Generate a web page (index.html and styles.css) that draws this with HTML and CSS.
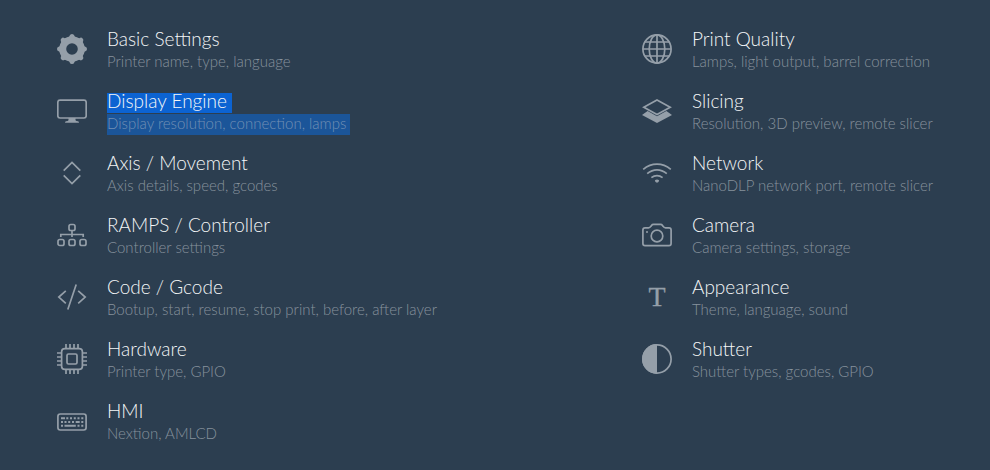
FILE: index.html
```html
<!DOCTYPE html>
<html lang="en">
<head>
<meta charset="utf-8">
<meta name="viewport" content="width=device-width, initial-scale=1">
<title>Settings</title>
<link rel="stylesheet" href="styles.css">
</head>
<body>
<nav class="settings" aria-label="Settings">
  <ul class="column">
    <li><a class="item" href="#basic">
      <svg class="icon" viewBox="0 0 30 30" aria-hidden="true">
        <defs><path id="tooth" d="M9.6 5 L11.4 3.6 Q12.4 3 12.7 1.6 Q13.2 0 15 0 Q16.8 0 17.3 1.6 Q17.6 3 18.6 3.6 L20.4 5Z"/></defs>
        <circle class="gear-ring" cx="15" cy="15" r="9.3"/>
        <g class="solid">
          <use href="#tooth"/><use href="#tooth" transform="rotate(45 15 15)"/><use href="#tooth" transform="rotate(90 15 15)"/><use href="#tooth" transform="rotate(135 15 15)"/><use href="#tooth" transform="rotate(180 15 15)"/><use href="#tooth" transform="rotate(225 15 15)"/><use href="#tooth" transform="rotate(270 15 15)"/><use href="#tooth" transform="rotate(315 15 15)"/>
        </g>
      </svg>
      <span class="text"><span class="title">Basic Settings</span><span class="note">Printer name, type, language</span></span>
    </a></li>
    <li><a class="item selected" href="#display">
      <svg class="icon" viewBox="0 0 30 30" aria-hidden="true">
        <rect class="line" x=".8" y="4.2" width="28.4" height="17.8" rx="2.2"/>
        <path class="solid" d="M11.5 22H18.5V24.2Q19 25 21 25.2Q22 25.5 22 26.8H8Q8 25.5 9 25.2Q11 25 11.5 24.2Z"/>
      </svg>
      <span class="text"><span class="title">Display Engine</span><span class="note">Display resolution, connection, lamps</span></span>
    </a></li>
    <li><a class="item" href="#axis">
      <svg class="icon" viewBox="0 0 30 30" aria-hidden="true">
        <path class="line" d="M6.7 12.7L15 4.4L23.3 12.7M6.7 17.3L15 25.6L23.3 17.3"/>
      </svg>
      <span class="text"><span class="title">Axis / Movement</span><span class="note">Axis details, speed, gcodes</span></span>
    </a></li>
    <li><a class="item" href="#ramps">
      <svg class="icon" viewBox="0 0 30 30" aria-hidden="true">
        <g class="line">
          <rect x="12" y="4.5" width="6" height="6" rx="1.8"/>
          <rect x="1" y="19.5" width="6" height="6" rx="1.8"/>
          <rect x="12" y="19.5" width="6" height="6" rx="1.8"/>
          <rect x="23" y="19.5" width="6" height="6" rx="1.8"/>
          <path d="M15 10.5V17M3.8 17V14.5H26.2V17"/>
        </g>
      </svg>
      <span class="text"><span class="title">RAMPS / Controller</span><span class="note">Controller settings</span></span>
    </a></li>
    <li><a class="item" href="#code">
      <svg class="icon" viewBox="0 0 30 30" aria-hidden="true">
        <path class="line" d="M8.8 8.9L1.8 15.1L8.8 21.4M21.2 8.9L28.2 15.1L21.2 21.4M19.2 2.4L10.8 27.6"/>
      </svg>
      <span class="text"><span class="title">Code / Gcode</span><span class="note">Bootup, start, resume, stop print, before, after layer</span></span>
    </a></li>
    <li><a class="item" href="#hardware">
      <svg class="icon" viewBox="0 0 30 30" aria-hidden="true">
        <g class="line">
          <rect x="4.6" y="4.6" width="20.8" height="20.8" rx="3.2"/>
          <rect x="10" y="10" width="10" height="10" rx="1.5"/>
          <path d="M9 0V4.5M13 0V4.5M17 0V4.5M21 0V4.5M9 25.5V30M13 25.5V30M17 25.5V30M21 25.5V30M0 9H4.5M0 13H4.5M0 17H4.5M0 21H4.5M25.5 9H30M25.5 13H30M25.5 17H30M25.5 21H30"/>
        </g>
      </svg>
      <span class="text"><span class="title">Hardware</span><span class="note">Printer type, GPIO</span></span>
    </a></li>
    <li><a class="item" href="#hmi">
      <svg class="icon" viewBox="0 0 30 30" aria-hidden="true">
        <rect class="line" x=".9" y="8" width="28.2" height="16" rx="2.4"/>
        <path class="solid" d="M4 11.3h4v2H4zM9.3 11.3h2v2h-2zM13 11.3h2v2h-2zM16.8 11.3h2v2h-2zM20.5 11.3h2v2h-2zM24.3 11.3h2v2h-2zM4 15h2v2H4zM7.5 15h2v2h-2zM11.2 15h2v2h-2zM15 15h2v2h-2zM18.7 15h4v2h-4zM24.3 15h2v2h-2zM4 18.7h2v2H4zM7.5 18.7h11.3v2H7.5zM20.5 18.7h2v2h-2zM24.3 18.7h2v2h-2z"/>
      </svg>
      <span class="text"><span class="title">HMI</span><span class="note">Nextion, AMLCD</span></span>
    </a></li>
  </ul>
  <ul class="column">
    <li><a class="item" href="#quality">
      <svg class="icon" viewBox="0 0 30 30" aria-hidden="true">
        <g class="line">
          <circle cx="15" cy="15" r="14.1"/>
          <ellipse cx="15" cy="15" rx="7.8" ry="14.1"/>
          <path d="M15 1V29M1 15H29M3 8H27M3 22H27"/>
        </g>
      </svg>
      <span class="text"><span class="title">Print Quality</span><span class="note">Lamps, light output, barrel correction</span></span>
    </a></li>
    <li><a class="item" href="#slicing">
      <svg class="icon" viewBox="0 0 30 30" aria-hidden="true">
        <path class="line" d="M15 4L28.2 11.3L15 18.6L1.8 11.3Z"/>
        <path class="solid" d="M0 18.9L5.6 15L15 20.2L24.4 15L30 18.9L15 27Z"/>
      </svg>
      <span class="text"><span class="title">Slicing</span><span class="note">Resolution, 3D preview, remote slicer</span></span>
    </a></li>
    <li><a class="item" href="#network">
      <svg class="icon" viewBox="0 0 30 30" aria-hidden="true">
        <path class="line" d="M1.2 11.4Q7.5 6.2 15 6.2T28.8 11.4M5.2 15.6Q9.8 11.8 15 11.8T24.8 15.6M9.4 19.6Q12 17.6 15 17.6T20.6 19.6"/>
        <path class="solid" d="M12.9 22.2Q15 20.6 17.1 22.2Q17 24.4 15 24.8Q13 24.4 12.9 22.2Z"/>
      </svg>
      <span class="text"><span class="title">Network</span><span class="note">NanoDLP network port, remote slicer</span></span>
    </a></li>
    <li><a class="item" href="#camera">
      <svg class="icon" viewBox="0 0 30 30" aria-hidden="true">
        <path class="line" d="M3 7.8H6.5Q8 7.8 8.8 6.4L9.5 5.4Q10.2 4.4 11.5 4.4H18.5Q19.8 4.4 20.5 5.4L21.2 6.4Q22 7.8 23.5 7.8H27Q29.1 7.8 29.1 10V23.4Q29.1 25.6 27 25.6H3Q.9 25.6 .9 23.4V10Q.9 7.8 3 7.8Z"/>
        <circle class="line" cx="15" cy="16" r="5.8"/>
        <circle class="solid" cx="5" cy="12" r="1"/>
      </svg>
      <span class="text"><span class="title">Camera</span><span class="note">Camera settings, storage</span></span>
    </a></li>
    <li><a class="item" href="#appearance">
      <svg class="icon" viewBox="0 0 30 30" aria-hidden="true">
        <text class="letter" x="15" y="24" text-anchor="middle">T</text>
      </svg>
      <span class="text"><span class="title">Appearance</span><span class="note">Theme, language, sound</span></span>
    </a></li>
    <li><a class="item" href="#shutter">
      <svg class="icon" viewBox="0 0 30 30" aria-hidden="true">
        <circle class="line" cx="15" cy="15" r="14.1"/>
        <path class="solid" d="M15 0A15 15 0 0 0 15 30Z"/>
      </svg>
      <span class="text"><span class="title">Shutter</span><span class="note">Shutter types, gcodes, GPIO</span></span>
    </a></li>
  </ul>
</nav>
</body>
</html>
```
FILE: styles.css
```css
body {
  margin: 0;
  background: #2c3e50;
  font-family: Lato, "Liberation Sans", sans-serif;
  font-weight: 300;
}

.settings {
  display: grid;
  grid-template-columns: 1fr 291px;
  padding: 31px 57px 16px;
}

.column {
  display: flex;
  flex-direction: column;
  gap: 20px;
  margin: 0;
  padding: 0;
  list-style: none;
}

.item {
  display: flex;
  gap: 20px;
  color: #f4f6f7;
  text-decoration: none;
}

.icon {
  flex: none;
  width: 30px;
  height: 30px;
  margin-top: 3px;
}

.line {
  fill: none;
  stroke: #959fa9;
  stroke-width: 1.7;
}

.gear-ring {
  fill: none;
  stroke: #959fa9;
  stroke-width: 7;
}

.solid {
  fill: #959fa9;
}

.letter {
  fill: #959fa9;
  stroke: #959fa9;
  stroke-width: 0.3;
  font: 400 28px "Liberation Serif", serif;
}

.text {
  display: flex;
  flex-direction: column;
  align-items: flex-start;
  gap: 1px;
  white-space: nowrap;
}

.title {
  padding-bottom: 4px;
  font-size: 19px;
  line-height: 16px;
}

.note {
  padding-bottom: 2px;
  color: #87929d;
  font-size: 15px;
  line-height: 19px;
}

.selected .title {
  padding-right: 5px;
  background: #0c63d2;
}

.selected .note {
  padding-right: 4px;
  color: #7290b4;
  background: #1b5599;
}
```
